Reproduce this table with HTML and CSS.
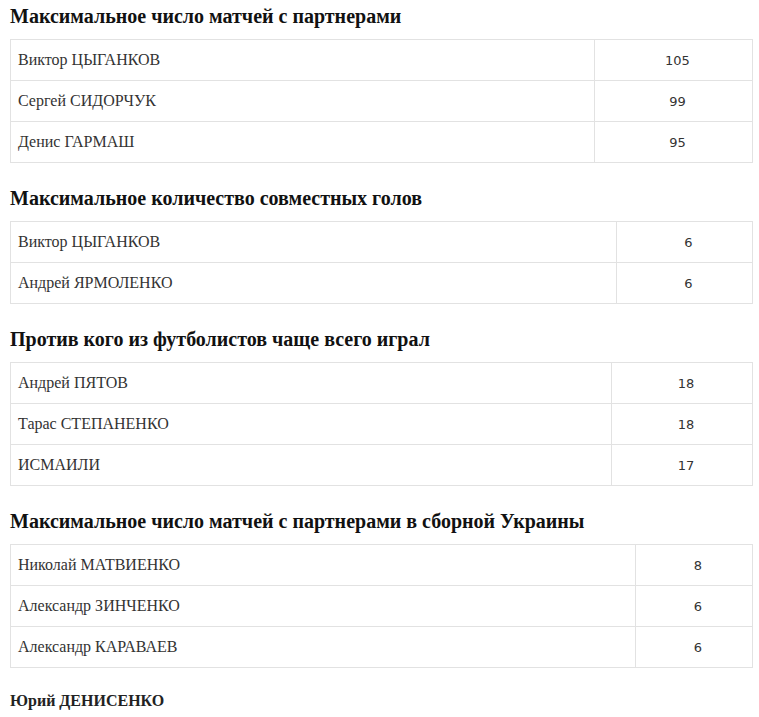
FILE: index.html
```html
<!DOCTYPE html>
<html lang="ru">
<head>
<meta charset="utf-8">
<title>Партнеры</title>
<link rel="stylesheet" href="styles.css">
</head>
<body>
<section class="block">
  <h2 class="title">Максимальное число матчей с партнерами</h2>
  <table class="stats w1">
    <tr><td class="name">Виктор ЦЫГАНКОВ</td><td class="num">105</td></tr>
    <tr><td class="name">Сергей СИДОРЧУК</td><td class="num">99</td></tr>
    <tr><td class="name">Денис ГАРМАШ</td><td class="num">95</td></tr>
  </table>
</section>
<section class="block">
  <h2 class="title">Максимальное количество совместных голов</h2>
  <table class="stats w2">
    <tr><td class="name">Виктор ЦЫГАНКОВ</td><td class="num">6</td></tr>
    <tr><td class="name">Андрей ЯРМОЛЕНКО</td><td class="num">6</td></tr>
  </table>
</section>
<section class="block">
  <h2 class="title">Против кого из футболистов чаще всего играл</h2>
  <table class="stats w3">
    <tr><td class="name">Андрей ПЯТОВ</td><td class="num">18</td></tr>
    <tr><td class="name">Тарас СТЕПАНЕНКО</td><td class="num">18</td></tr>
    <tr><td class="name">ИСМАИЛИ</td><td class="num">17</td></tr>
  </table>
</section>
<section class="block">
  <h2 class="title">Максимальное число матчей с партнерами в сборной Украины</h2>
  <table class="stats w4">
    <tr><td class="name">Николай МАТВИЕНКО</td><td class="num">8</td></tr>
    <tr><td class="name">Александр ЗИНЧЕНКО</td><td class="num">6</td></tr>
    <tr><td class="name">Александр КАРАВАЕВ</td><td class="num">6</td></tr>
  </table>
</section>
<p class="player">Юрий ДЕНИСЕНКО</p>
</body>
</html>
```
FILE: styles.css
```css
html, body {
  background: #fff;
}
body {
  margin: 0;
  padding: 0 6px 0 10px;
  font-family: "Liberation Serif", "Times New Roman", serif;
  color: #333;
}
.block {
  display: block;
}
.title {
  font-size: 20px;
  line-height: 22px;
  font-weight: bold;
  color: #111;
  margin: 5px 0 12px;
}
.block + .block .title {
  margin-top: 24px;
}
.stats {
  width: 100%;
  border-collapse: collapse;
  table-layout: fixed;
}
.stats td {
  border: 1px solid #e2e2e2;
  height: 40px;
  padding: 0 7px;
  font-size: 16px;
  vertical-align: middle;
}
.stats .num {
  text-align: center;
  font-family: "DejaVu Sans", Tahoma, sans-serif;
  font-size: 13px;
  color: #333;
  padding: 0 4px 0 12px;
}
.w1 .num { width: 141px; }
.w2 .num { width: 119px; }
.w3 .num { width: 124px; }
.w4 .num { width: 100px; }
.player {
  margin: 23px 0 0;
  font-size: 16px;
  font-weight: bold;
  line-height: 20px;
  color: #222;
}
```
